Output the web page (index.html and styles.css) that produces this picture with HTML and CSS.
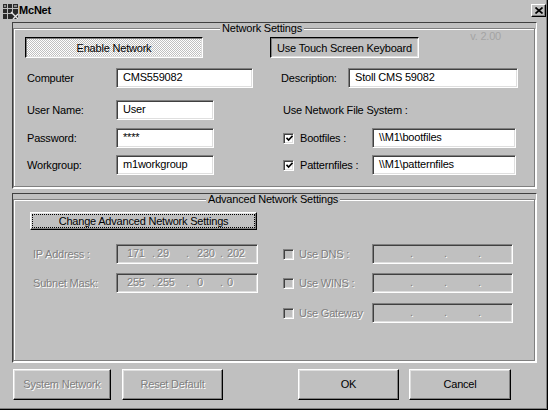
FILE: index.html
```html
<!DOCTYPE html>
<html lang="en">
<head>
<meta charset="utf-8">
<title>McNet</title>
<link rel="stylesheet" href="styles.css">
</head>
<body>
<div class="window">
  <div class="titlebar">
    <svg class="appicon" width="15" height="15" viewBox="0 0 15 15">
      <rect x="0" y="0" width="15" height="15" fill="#2a2a2a"/>
      <path d="M0 4.5H15M0 9.5H9M4.5 0V15M9.5 0V9" stroke="#bdbdbd" stroke-width="1"/>
      <path d="M8 8L15 15M10 15L15 10" stroke="#e8e8e8" stroke-width="1.4"/>
      <rect x="1" y="1" width="2" height="2" fill="#888"/>
      <rect x="11" y="1" width="3" height="2" fill="#888"/>
    </svg>
    <span class="title">McNet</span>
    <span class="close"><svg width="8" height="7" viewBox="0 0 8 7"><path d="M0.5 0.5L7.5 6.5M7.5 0.5L0.5 6.5" stroke="#000" stroke-width="1.7"/></svg></span>
  </div>
  <div class="main">
    <div class="panel">
      <fieldset class="group g1">
        <legend class="leg1">Network Settings</legend>
        <div class="grid grid1">
          <div class="cell ha"><span class="btn sunken dither w178">Enable Network</span></div>
          <div class="cell ha"><span class="btn sunken w149">Use Touch Screen Keyboard</span><span class="version">v. 2.00</span></div>

          <div class="cell"><span class="lbl lp2 l89">Computer</span><span class="field w137">CMS559082</span></div>
          <div class="cell"><span class="lbl lp11 l67">Description:</span><span class="field w170">Stoll CMS 59082</span></div>

          <div class="cell"><span class="lbl lp2 l89">User Name:</span><span class="field w98">User</span></div>
          <div class="cell"><span class="lbl lp13">Use Network File System :</span></div>

          <div class="cell"><span class="lbl lp2 l89">Password:</span><span class="field w98">****</span></div>
          <div class="cell"><span class="chk on m13"><svg width="7" height="7" viewBox="0 0 7 7"><path d="M0.5 2.8L2.6 5L6.5 0.8" fill="none" stroke="#000" stroke-width="1.6"/></svg></span><span class="lbl cl72">Bootfiles :</span><span class="field w144">\\M1\bootfiles</span></div>

          <div class="cell"><span class="lbl lp2 l89">Workgroup:</span><span class="field w98">m1workgroup</span></div>
          <div class="cell"><span class="chk on m13"><svg width="7" height="7" viewBox="0 0 7 7"><path d="M0.5 2.8L2.6 5L6.5 0.8" fill="none" stroke="#000" stroke-width="1.6"/></svg></span><span class="lbl cl72">Patternfiles :</span><span class="field w144">\\M1\patternfiles</span></div>
        </div>
      </fieldset>
    </div>

    <div class="panel panel2">
      <fieldset class="group g2">
        <legend class="leg2">Advanced Network Settings</legend>
        <div class="grid grid2">
          <div class="cell hb"><span class="btn raised focus w227">Change Advanced Network Settings</span></div>
          <div class="cell hb"></div>

          <div class="cell"><span class="lbl dis lp8 l83">IP Address :</span><span class="field off w142 ip"><span class="o1">171</span><span class="d1">.</span><span class="o2">29</span><span class="d2">.</span><span class="o3">230</span><span class="d3">.</span><span class="o4">202</span></span></div>
          <div class="cell"><span class="chk m13"></span><span class="lbl dis cl73">Use DNS :</span><span class="field off w141 ipe"><span>.</span><span>.</span><span>.</span></span></div>

          <div class="cell"><span class="lbl dis lp8 l83">Subnet Mask:</span><span class="field off w142 ip"><span class="o1">255</span><span class="d1">.</span><span class="o2">255</span><span class="d2">.</span><span class="o3">0</span><span class="d3">.</span><span class="o4">0</span></span></div>
          <div class="cell"><span class="chk m13"></span><span class="lbl dis cl73">Use WINS :</span><span class="field off w141 ipe"><span>.</span><span>.</span><span>.</span></span></div>

          <div class="cell"></div>
          <div class="cell"><span class="chk m13"></span><span class="lbl dis cl73">Use Gateway</span><span class="field off w141 ipe"><span>.</span><span>.</span><span>.</span></span></div>
        </div>
      </fieldset>
    </div>

    <div class="footer">
      <span class="btn raised big w98 dis">System Network</span>
      <span class="btn raised big w101 dis gap11">Reset Default</span>
      <span class="btn raised big w101 push">OK</span>
      <span class="btn raised big w102 gap10 endm">Cancel</span>
    </div>
  </div>
</div>
</body>
</html>
```

FILE: styles.css
```css
* { box-sizing: border-box; }

html, body {
  margin: 0;
  padding: 0;
}

body {
  width: 548px;
  height: 410px;
  overflow: hidden;
  background: #c0c0c0;
  font-family: "Liberation Sans", Arial, sans-serif;
  font-size: 11px;
  line-height: 13px;
  letter-spacing: -0.2px;
  color: #000;
}

.window {
  width: 548px;
  height: 410px;
  background: #c0c0c0;
  border-right: 1px solid #000;
  border-bottom: 1px solid #000;
  box-shadow: inset -1px -1px 0 #808080;
  display: flex;
  flex-direction: column;
}

/* title bar */
.titlebar {
  height: 22px;
  display: flex;
  align-items: center;
  padding: 0 1px 1px 3px;
}
.appicon { flex: none; margin-top: 1px; }
.title {
  font-weight: bold;
  margin-left: 1px;
  letter-spacing: -0.2px;
}
.close {
  margin-left: auto;
  width: 15px;
  height: 13px;
  display: flex;
  align-items: center;
  justify-content: center;
  border: 1px solid;
  border-color: #fff #000 #000 #fff;
  box-shadow: inset -1px -1px 0 #808080;
}

/* main area */
.main {
  padding: 0 10px 0 12px;
}

.panel {
  border: 1px solid;
  border-color: #404040 #fff #fff #404040;
  padding: 0 1px 1px 0;
}
.panel2 { margin-top: 4px; }

.group {
  margin: 0;
  min-width: 0;
  border: 1px solid #808080;
  box-shadow: inset 1px 1px 0 #fff, 1px 1px 0 #fff;
}
.g1 { padding: 3px 0 11px 11px; }
.g2 { padding: 7px 0 37px 11px; }

.group legend {
  padding: 0 2px;
  line-height: 11px;
  background: #c0c0c0;
}
.leg1 { margin-left: 195px; }
.leg2 { margin-left: 181px; }

.grid {
  display: grid;
  grid-template-columns: 245px 1fr;
  align-items: start;
}
.grid1 { grid-template-rows: 31px 32px 28px 27px 20px; }
.grid2 { grid-template-rows: 32px 29px 30px 20px; }

.cell {
  display: flex;
  align-items: center;
  height: 20px;
}
.cell.ha { height: 21px; align-items: stretch; }
.cell.hb { height: 18px; align-items: stretch; }

/* labels */
.lbl { flex: none; white-space: nowrap; }
.lp2 { padding-left: 2px; }
.lp8 { padding-left: 8px; }
.lp11 { padding-left: 11px; }
.lp13 { padding-left: 13px; }
.l89 { width: 91px; }
.l83 { width: 91px; }
.l67 { width: 78px; }
.cl72 { width: 72px; margin-left: 6px; }
.cl73 { width: 73px; margin-left: 5px; }

.dis {
  color: #808080;
  text-shadow: 1px 1px 0 #fff;
}

/* text fields */
.field {
  flex: none;
  height: 20px;
  background: #fff;
  border: 1px solid;
  border-color: #808080 #fff #fff #808080;
  box-shadow: inset 1px 1px 0 #404040, inset -1px -1px 0 #dfdfdf;
  padding: 2px 0 0 6px;
  white-space: nowrap;
  overflow: hidden;
}
.field.off {
  background: #c0c0c0;
  color: #808080;
  text-shadow: 1px 1px 0 #fff;
}
.w98 { width: 98px; }
.w137 { width: 137px; }
.w141 { width: 141px; }
.w142 { width: 142px; }
.w144 { width: 144px; }
.w170 { width: 170px; }

.ip { display: flex; padding-left: 10px; }
.ip .o1 { width: 25px; }
.ip .o2 { width: 29px; }
.ip .o3 { width: 23px; }
.ip .d1 { width: 5px; }
.ip .d2 { width: 11px; }
.ip .d3 { width: 7px; }

.ipe { display: flex; padding-left: 37px; }
.ipe span { width: 34px; }

/* checkboxes */
.chk {
  flex: none;
  width: 11px;
  height: 11px;
  background: #c0c0c0;
  border: 1px solid;
  border-color: #808080 #fff #fff #808080;
  box-shadow: inset 1px 1px 0 #404040, inset -1px -1px 0 #dfdfdf;
  display: flex;
  align-items: center;
  justify-content: center;
}
.chk.on { background: #fff; }
.chk svg { margin: 1px 0 0 1px; }
.m13 { margin-left: 13px; }

/* buttons */
.btn {
  flex: none;
  display: flex;
  align-items: center;
  justify-content: center;
  white-space: nowrap;
  border: 1px solid;
}
.raised {
  border-color: #fff #000 #000 #fff;
  box-shadow: inset -1px -1px 0 #808080, inset 1px 1px 0 #dfdfdf;
}
.sunken {
  border-color: #000 #fff #fff #000;
  box-shadow: inset 1px 1px 0 #808080, inset -1px -1px 0 #dfdfdf;
  padding-top: 1px;
}
.dither {
  background: repeating-conic-gradient(#fff 0 25%, #c0c0c0 0 50%) 0 0 / 2px 2px;
}
.focus {
  outline: 1px dotted #000;
  outline-offset: -3px;
  margin-left: 5px;
}
.w178 { width: 178px; }
.w149 { width: 149px; }
.w227 { width: 227px; }

.version {
  margin-left: auto;
  margin-right: 33px;
  margin-top: -7px;
  align-self: flex-start;
  color: #a4a4a4;
}

/* footer */
.footer {
  display: flex;
  margin-top: 6px;
  padding-left: 1px;
}
.big { height: 31px; }
.w101 { width: 101px; }
.w102 { width: 102px; }
.gap11 { margin-left: 11px; }
.gap10 { margin-left: 10px; }
.push { margin-left: auto; }
.endm { margin-right: 26px; }
```
